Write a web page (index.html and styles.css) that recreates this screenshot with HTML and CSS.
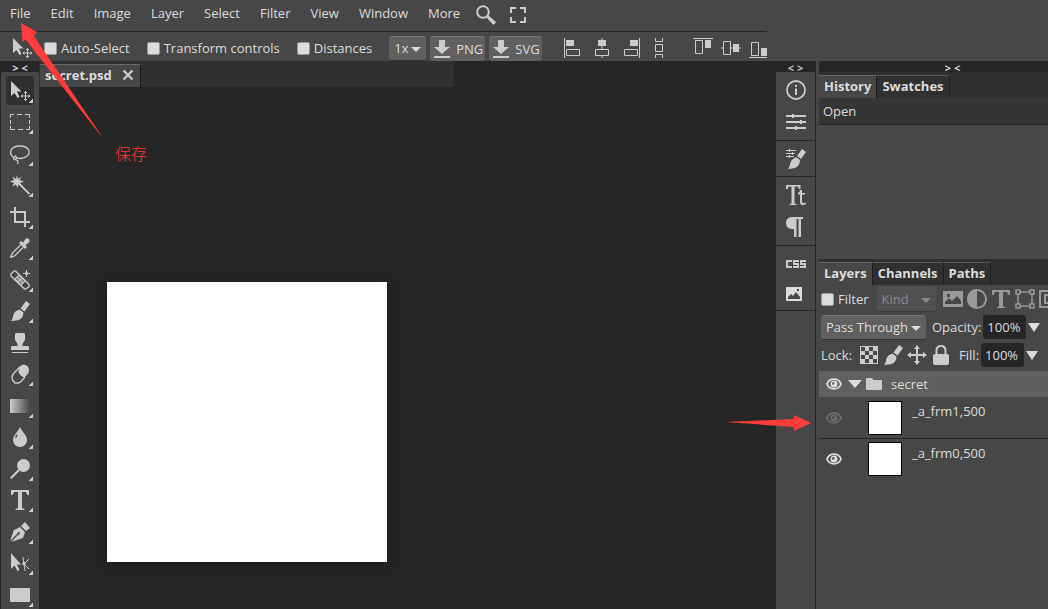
FILE: index.html
```html
<!DOCTYPE html>
<html lang="en">
<head>
<meta charset="utf-8">
<title>secret.psd</title>
<link rel="stylesheet" href="styles.css">
</head>
<body>
<svg class="defs" aria-hidden="true">
  <defs>
    <symbol id="move-tool" viewBox="0 0 20 20"><path d="M1 0V15L4.500 12L7.500 17L9.500 16L7 10.500H11.500Z"/><path d="M15.500 10.500V19.500M11 15H20M14 12L15.500 10.500L17 12M14 18L15.500 19.500L17 18M12.500 13.500L11 15L12.500 16.500M18.500 13.500L20 15L18.500 16.500" fill="none" stroke="currentColor"/></symbol>
    <symbol id="brush" viewBox="0 0 20 20"><path d="M16 0L20 3L14.500 10.500L10.500 7.500Z"/><path d="M9.500 8.500L13.500 11.500C13.500 16 11 19 6 19.500L1 20C4 17 2 13 6 10Z"/></symbol>
    <symbol id="eye" viewBox="0 0 16 12"><path d="M1 6C3.500 -.5 12.500 -.5 15 6C12.500 12.500 3.500 12.500 1 6Z" fill="none" stroke="currentColor" stroke-width="1.800"/><path fill-rule="evenodd" d="M8 2.500A3.500 3.500 0 1 1 8 9.500A3.500 3.500 0 1 1 8 2.500ZM7.500 4A1.500 1.500 0 1 0 7.500 7V5.500H9Q8.800 4 7.500 4Z"/></symbol>
    <symbol id="down" viewBox="0 0 20 20"><path d="M7 1H13V8H18L10 15L2 8H7ZM2 17H18V19H2Z"/></symbol>
    <linearGradient id="fade"><stop stop-color="#ccc"/><stop offset="1" stop-color="#474747"/></linearGradient>
  </defs>
</svg>

<div class="app">
  <header class="top">
    <nav class="menu">
      <button>File</button><button>Edit</button><button>Image</button><button>Layer</button><button>Select</button><button>Filter</button><button>View</button><button>Window</button><button>More</button>
      <button class="glyph" aria-label="Search"><svg width="20" height="20" viewBox="0 0 20 20"><circle cx="7" cy="7" r="5.800" fill="none" stroke="currentColor" stroke-width="2"/><path d="M11 12.500L12.500 11L19.500 17L17.500 19.500Z" stroke="currentColor"/></svg></button>
      <button class="glyph" aria-label="Full screen"><svg width="16" height="16" viewBox="0 0 16 16"><path d="M1 6V1H6M10 1H15V6M15 10V15H10M6 15H1V10" fill="none" stroke="currentColor" stroke-width="2"/></svg></button>
    </nav>
    <div class="options">
      <svg class="current" width="20" height="20"><use href="#move-tool"/></svg>
      <label class="check"><input type="checkbox">Auto-Select</label>
      <label class="check"><input type="checkbox">Transform controls</label>
      <label class="check"><input type="checkbox">Distances</label>
      <div class="exports">
        <span class="drop drop-scale"><select aria-label="Export scale"><option>1x</option></select></span>
        <button class="export"><svg width="20" height="20"><use href="#down"/></svg>PNG</button>
        <button class="export"><svg width="20" height="20"><use href="#down"/></svg>SVG</button>
      </div>
      <div class="align">
        <button aria-label="Align left"><svg width="16" height="20" viewBox="0 0 16 20"><path d="M0 0H1V20H0ZM2 2H10V8H2Z"/><path d="M2.500 11.500H15.500V17.500H2.500Z" class="line"/></svg></button>
        <button aria-label="Align centre"><svg width="14" height="20" viewBox="0 0 14 20"><path d="M6 0H8V2H6ZM6 8H8V11H6ZM6 18H8V20H6Z" opacity=".5"/><path d="M3 2H11V8H3Z"/><path d="M.5 11.500H13.500V17.500H.5Z" class="line"/></svg></button>
        <button aria-label="Align right"><svg width="16" height="20" viewBox="0 0 16 20"><path d="M15 0H16V20H15ZM6 2H14V8H6Z"/><path d="M.5 11.500H13.500V17.500H.5Z" class="line"/></svg></button>
        <button aria-label="Distribute"><svg width="8" height="20" viewBox="0 0 8 20"><path d="M.5 0V3.500H7.500V0M.5 6.500H7.500V13.500H.5ZM.5 20V16.500H7.500V20" class="line"/></svg></button>
      </div>
      <div class="align align-vertical">
        <button aria-label="Align top"><svg width="20" height="20" viewBox="0 0 20 20"><path d="M0 0H20V1H0ZM12 2H18V10H12Z"/><path d="M2.500 2.500H9.500V15.500H2.500Z" class="line"/></svg></button>
        <button aria-label="Align middle"><svg width="20" height="20" viewBox="0 0 20 20"><path d="M0 9H2V11H0ZM10 9H12V11H10ZM18 9H20V11H18Z" opacity=".5"/><path d="M12 6H18V14H12Z"/><path d="M2.500 3.500H9.500V16.500H2.500Z" class="line"/></svg></button>
        <button aria-label="Align bottom"><svg width="20" height="20" viewBox="0 0 20 20"><path d="M0 19H20V20H0ZM12 10H18V18H12Z"/><path d="M2.500 4.500H9.500V17.500H2.500Z" class="line"/></svg></button>
      </div>
    </div>
  </header>

  <main class="body">
    <aside class="tools">
      <div class="grip">&gt;&nbsp;&lt;</div>
      <div class="tool-list">
        <button class="tool active" aria-label="Move"><svg viewBox="0 0 20 20"><use href="#move-tool"/></svg></button>
        <button class="tool" aria-label="Marquee"><svg viewBox="0 0 20 20"><path d="M.5 6V2.500H4M7 2.500H12M15 2.500H19.500V6M19.500 8V12M19.500 14V17.500H16M13 17.500H8M5 17.500H.5V14M.5 12V8" class="line"/></svg></button>
        <button class="tool" aria-label="Lasso"><svg viewBox="0 0 20 20"><path d="M4 13.500C-2 10 0 2 10 2C22.500 2 22 14 10 14.500C8 14.500 6.500 14 5.500 12.500C3.500 12.500 2.500 14.500 4.500 15.500C7.500 15.500 6.500 12.500 5 11.500M5 15.500L8 17L7.500 20" class="line" stroke-width="1.300"/></svg></button>
        <button class="tool" aria-label="Magic wand"><svg viewBox="0 0 20 20"><path d="M7 0L8 4L11.500 1.500L9.500 5L14 6.500L10 8L12 11L8.500 9.500L7.500 13L6 9.500L2.500 11.500L4 8L0 6.500L4 5L2.500 1.500L6 4Z"/><path d="M9 8.500L19.500 19" class="line" stroke-width="1.800"/></svg></button>
        <button class="tool" aria-label="Crop"><svg viewBox="0 0 20 20"><path d="M5 0V15H20M0 5H15V20" class="line" stroke-width="2"/></svg></button>
        <button class="tool" aria-label="Eyedropper"><svg viewBox="0 0 20 20"><path d="M11 3L13 4.500L15.500 1C17.500-1 21 2 19 4.500L15.500 7L17 9L15 11L9 5Z"/><path d="M10.500 7L2 15.500L.8 19.200L4.500 18L13 9.500" class="line" stroke-width="1.300"/></svg></button>
        <button class="tool" aria-label="Healing"><svg viewBox="0 0 20 20"><path d="M1 4L4 1Q5 .5 6 1.500L19 14.500Q19.500 15.500 19 16.500L16 19Q15 19.500 14 18.500L1 6Q.5 5 1 4Z" class="line" stroke-width="1.300"/><path d="M4 9L9 4L16 11L11 16Z" opacity=".45"/><path d="M5 9L11 15M7 7L13 13M9 5L15 11M5 9L9 5M8 12L12 8M11 15L15 11M16.500 0V7M13 3.500H20" class="line"/><path d="M16.500 1L17.500 2.500L19 3.500L17.500 4.500L16.500 6L15.500 4.500L14 3.500L15.500 2.500Z"/></svg></button>
        <button class="tool" aria-label="Brush"><svg viewBox="0 0 20 20"><use href="#brush"/></svg></button>
        <button class="tool plain" aria-label="Clone stamp"><svg viewBox="0 0 20 20"><path d="M6 0H14L15 1V7L12.500 11V13H18L19 14V17H1V14L2 13H7.500V11L5 7V1ZM2 19H18V20H2Z"/></svg></button>
        <button class="tool" aria-label="Eraser"><svg viewBox="0 0 20 20"><path d="M11 1.500L14 .5L17.500 2L19 5L18.500 9L14.500 13.500L11 12L8.500 8.500L9 4Z"/><path d="M10.500 2.500L4 9L2 12.500L2.500 16L5 19L8.500 19L11 17.500L15 13" class="line" stroke-width="1.400"/></svg></button>
        <button class="tool" aria-label="Gradient"><svg viewBox="0 0 20 20"><path d="M0 3H20V17H0Z" fill="url(#fade)"/></svg></button>
        <button class="tool" aria-label="Blur"><svg viewBox="0 0 20 20"><path d="M10 0C12 5 17 8 17 13A7 7 0 0 1 3 13C3 8 8 5 10 0Z"/><path d="M7.500 8Q5.500 9 6 11" fill="none" stroke="#474747" stroke-width="1.300"/></svg></button>
        <button class="tool" aria-label="Dodge"><svg viewBox="0 0 20 20"><circle cx="13.500" cy="6.500" r="6.500"/><path d="M9 11L.8 19.200" class="line" stroke-width="2"/></svg></button>
        <button class="tool" aria-label="Type"><svg viewBox="0 0 20 20"><path d="M1 0H19V5H17.500L16 2H12V18L14.500 19V20H5.500V19L8 18V2H4L2.500 5H1Z"/></svg></button>
        <button class="tool" aria-label="Pen"><svg viewBox="0 0 20 20"><path d="M15 0L20 6L16 9L11 4ZM10 5L15 10L13 16L1 20L8.500 12.500A1.200 1.200 0 1 0 7.500 11.500L0 19L4 8Z"/></svg></button>
        <button class="tool" aria-label="Path select"><svg viewBox="0 0 20 20"><path d="M1 0V16L4.500 12.500L7.500 18L9.500 17L7 11.500H11Z"/><path d="M13 4L15 18M19 6L14 11L19 16" class="line"/><path d="M12.500 9H15.500V12H12.500Z"/></svg></button>
        <button class="tool" aria-label="Rectangle"><svg viewBox="0 0 20 20"><rect y="3" width="20" height="14" rx="1"/></svg></button>
      </div>
    </aside>

    <section class="workspace">
      <div class="file-tabs"><div class="file-tab">secret.psd <button aria-label="Close"><svg width="12" height="12" viewBox="0 0 12 12"><path d="M1.500 1.500L10.500 10.500M10.500 1.500L1.500 10.500" stroke="currentColor" stroke-width="2.300"/></svg></button></div></div>
      <div class="artboard"></div>
    </section>

    <aside class="dock">
      <div class="grip">&lt;&nbsp;&gt;</div>
      <div class="dock-group">
        <button aria-label="Info"><svg viewBox="0 0 20 20"><circle cx="10" cy="10" r="9" class="line" stroke-width="1.800"/><path d="M9 5H11V7H9ZM9 8.500H11V15H9Z"/></svg></button>
        <button aria-label="Adjustments"><svg viewBox="0 0 20 20"><path d="M0 3H20V5H0ZM0 9H20V11H0ZM0 15H20V17H0ZM6 2H8V6H6ZM14 8H16V12H14ZM9 14H11V18H9Z"/></svg></button>
      </div>
      <div class="dock-group dock-single">
        <button aria-label="Brush settings"><svg viewBox="0 0 20 20"><path d="M0 1H10V2H0ZM0 4H9V5H0ZM0 7H8V8H0ZM3 0H4V3H3ZM6 3H7V6H6ZM3 6H4V9H3ZM16 0L20 3L15 10L11 7ZM10 8L14 11C14 16 11 20 2 20C5 17 3 13 7 10Z"/></svg></button>
      </div>
      <div class="dock-group">
        <button aria-label="Character"><svg viewBox="0 0 20 20"><path d="M0 0H14.500V4H13L12 1.500H8.500V18.500L10.500 19V20H3.500V19L5.500 18.500V1.500H2.500L1.500 4H0ZM14 5H16V8H19V9.500H16V17Q17 19 20 17.500V19Q14 22 14 17V9.500H12V8Q14 7.500 14 5Z"/></svg></button>
        <button aria-label="Paragraph"><svg viewBox="0 0 20 20"><path d="M6 0H17V2H15V20H12.500V2H10.500V20H8V12H6C-2 12-2 0 6 0Z"/></svg></button>
      </div>
      <div class="dock-group dock-last">
        <button aria-label="CSS"><svg viewBox="0 0 20 20"><path d="M6 7H1V13H6M13 7H8V10H12V13H7M20 7H15V10H19V13H14" class="line" stroke-width="2"/></svg></button>
        <button class="bright" aria-label="Image"><svg viewBox="0 0 20 20"><path fill-rule="evenodd" d="M0 3H16V17H0ZM2 15H14V13L10 8L7 12L5 10L2 13ZM11 5V7H13V5Z"/></svg></button>
      </div>
    </aside>

    <aside class="panels">
      <div class="grip">&gt;&nbsp;&lt;</div>
      <section class="history">
        <div class="tabs"><button class="tab active">History</button><button class="tab">Swatches</button></div>
        <div class="step">Open</div>
      </section>
      <section class="layers">
        <div class="tabs"><button class="tab active">Layers</button><button class="tab">Channels</button><button class="tab">Paths</button></div>
        <div class="row">
          <label class="check"><input type="checkbox">Filter</label>
          <span class="drop drop-kind"><select aria-label="Filter kind" disabled><option>Kind</option></select></span>
          <div class="kinds">
            <svg viewBox="0 0 20 20"><path fill-rule="evenodd" d="M0 2H20V18H0ZM2 15H18V12L14 7L9 12L6 9L2 13ZM4 5V8H7V5Z"/></svg>
            <svg viewBox="0 0 20 20"><circle cx="10" cy="10" r="9" class="line" stroke-width="2"/><path d="M10 0A10 10 0 0 0 10 20Z"/></svg>
            <svg viewBox="0 0 20 20"><path d="M1 1H19V6H17.500L16 3H12V17.500L14 18V19H6V18L8 17.500V3H4L2.500 6H1Z"/></svg>
            <svg viewBox="0 0 20 20"><path d="M1 1H5V5H1ZM15 1H19V5H15ZM1 15H5V19H1ZM15 15H19V19H15ZM5 3H15M5 17H15M3 5V15M17 5V15" class="line" stroke-width="1.500"/></svg>
            <svg viewBox="0 0 20 20"><path d="M1 2H19V18H1ZM6 6H14V14H6Z" class="line" stroke-width="2"/></svg>
          </div>
        </div>
        <div class="row">
          <span class="drop drop-blend"><select aria-label="Blend mode"><option>Pass Through</option></select></span>
          <label class="amount amount-opacity">Opacity:<input type="text" value="100%"></label><button class="more" aria-label="Opacity slider"></button>
        </div>
        <div class="row">
          <span>Lock:</span>
          <div class="locks">
            <button aria-label="Lock transparency"><svg viewBox="0 0 20 20"><path fill-rule="evenodd" d="M1 1H19V19H1ZM2 2V6H6V2ZM10 2V6H14V2ZM6 6V10H10V6ZM14 6V10H18V6ZM2 10V14H6V10ZM10 10V14H14V10ZM6 14V18H10V14ZM14 14V18H18V14Z"/></svg></button>
            <button aria-label="Lock pixels"><svg viewBox="0 0 20 20"><use href="#brush"/></svg></button>
            <button aria-label="Lock position"><svg viewBox="0 0 20 20"><path d="M10 0L13 4H11V9H16V7L20 10L16 13V11H11V16H13L10 20L7 16H9V11H4V13L0 10L4 7V9H9V4H7Z"/></svg></button>
            <button aria-label="Lock all"><svg viewBox="0 0 20 20"><path d="M5.500 10V5.500Q5.500 1 10 1T14.500 5.500V10" class="line" stroke-width="2"/><rect x="2" y="9" width="16" height="11" rx="2"/></svg></button>
          </div>
          <label class="amount">Fill:<input type="text" value="100%"></label><button class="more" aria-label="Fill slider"></button>
        </div>
        <div class="folder">
          <svg class="eye" viewBox="0 0 16 12"><use href="#eye"/></svg>
          <svg class="caret" viewBox="0 0 14 8"><path d="M0 0H14L7 8Z"/></svg>
          <svg class="folder-icon" viewBox="0 0 16 12"><path d="M0 1Q0 0 1 0H6L7.500 2H15Q16 2 16 3V11Q16 12 15 12H1Q0 12 0 11Z"/></svg>
          <span>secret</span>
        </div>
        <div class="layer"><svg class="eye hidden-layer" viewBox="0 0 16 12"><use href="#eye"/></svg><div class="thumb"></div><span>_a_frm1,500</span></div>
        <div class="layer"><svg class="eye" viewBox="0 0 16 12"><use href="#eye"/></svg><div class="thumb"></div><span>_a_frm0,500</span></div>
      </section>
    </aside>
  </main>

  <svg class="pointer pointer-file" width="110" height="140" viewBox="0 0 110 140"><path d="M21 23L37 32L33.500 35.500L101 135L99.500 134L25.500 39.500L22.500 42Z"/></svg>
  <span class="note" lang="zh">保存</span>
  <svg class="pointer pointer-layer" width="86" height="18" viewBox="0 0 86 18"><path d="M0 7L69 4V0L86 8L69 16V12Z"/></svg>
</div>
</body>
</html>
```

FILE: styles.css
```css
* { box-sizing: border-box; }

body {
  margin: 0;
  background: #262626;
  color: #dcdcdc;
  font: 13px/18px "Open Sans", "Noto Sans CJK SC", sans-serif;
}

button, select, input { font: inherit; color: inherit; }

button {
  display: flex;
  align-items: center;
  justify-content: center;
  margin: 0;
  padding: 0;
  border: 0;
  background: none;
}

svg { display: block; flex: none; fill: currentColor; }
.line { fill: none; stroke: currentColor; }
.defs { position: absolute; width: 0; height: 0; }

.app {
  position: relative;
  display: flex;
  flex-direction: column;
  height: 100vh;
  overflow: hidden;
}

/* Menu and tool options */
.top {
  flex: none;
  padding-right: 281px;
  background: #474747;
}

.menu {
  display: flex;
  align-items: center;
  height: 32px;
  padding-bottom: 6px;
  border-bottom: 1px solid #262626;
}
.menu button { padding: 0 10px; }
.menu .glyph { padding: 4px 0 0 6px; color: #ccc; }
.menu .glyph + .glyph { padding-left: 14px; }

.options {
  display: flex;
  align-items: center;
  height: 29px;
  padding: 3px 0 0 12px;
  overflow: hidden;
  white-space: nowrap;
}
.current { color: #ccc; }

.check { display: flex; align-items: center; gap: 4px; }
.check input {
  appearance: none;
  width: 13px;
  height: 13px;
  margin: 1px 0 0;
  border: 1px solid #999;
  border-radius: 2px;
  background: #dcdcdc;
}
.options .check { margin-right: 17px; }
.options .current + .check { margin-left: 12px; }

.exports { display: flex; flex: none; gap: 4px; }

.drop { position: relative; display: block; flex: none; }
.drop select {
  appearance: none;
  display: block;
  width: 100%;
  height: 25px;
  margin: 0;
  padding: 0 0 0 5px;
  border: 0;
  border-top: 1px solid #737373;
  border-bottom: 1px solid #303030;
  border-radius: 3px;
  background: #606060;
}
.drop::after {
  content: "";
  position: absolute;
  right: 5px;
  top: 11px;
  border: 5px solid transparent;
  border-top-color: #dcdcdc;
  border-bottom: 0;
}
.drop-scale { width: 37px; }
.drop-kind { width: 59px; }
.drop-kind select {
  border-top-color: #555;
  border-bottom-color: #3c3c3c;
  background: #505050;
  color: #888;
  opacity: 1;
}
.drop-kind::after { border-top-color: #888; }
.drop-blend { width: 105px; }

.export {
  gap: 4px;
  height: 25px;
  padding: 0 2px;
  border-top: 1px solid #737373;
  border-radius: 3px;
  background: #606060;
}
.export svg { color: #ccc; }

.align { display: flex; flex: none; gap: 15px; margin-left: 22px; color: #ccc; }
.align-vertical { gap: 8px; margin-left: 30px; }

/* Main area */
.body { display: flex; flex: 1; min-height: 0; }

.grip {
  flex: none;
  height: 11px;
  background: #262626;
  font-size: 11px;
  font-weight: 700;
  line-height: 13px;
  text-align: center;
}

.tools { display: flex; flex-direction: column; flex: none; width: 39px; padding-left: 1px; }
.tool-list { flex: 1; min-height: 0; padding: 4px 5px 0; background: #474747; }
.tool {
  position: relative;
  width: 28px;
  height: 29px;
  margin-bottom: 2px;
  border-radius: 3px;
  color: #ccc;
}
.tool:nth-child(even) { margin-bottom: 3px; }
.tool.active { background: #303030; }
.tool svg { width: 20px; height: 20px; }
.tool::after {
  content: "";
  position: absolute;
  right: 1px;
  bottom: 2px;
  width: 5px;
  height: 5px;
  background: linear-gradient(135deg, transparent 50%, #ccc 60%);
}
.tool.plain::after { display: none; }

.workspace { flex: 1; min-width: 0; }
.file-tabs {
  width: 415px;
  height: 26px;
  padding: 3px 0 0 1px;
  background: #303030;
}
.file-tab {
  display: flex;
  align-items: center;
  gap: 10px;
  width: 101px;
  height: 23px;
  padding: 0 0 2px 5px;
  border-top: 1px solid #666;
  border-right: 1px solid #1c1c1c;
  background: #474747;
  font-weight: 700;
}
.file-tab button { color: #ccc; }
.artboard {
  width: 280px;
  height: 280px;
  margin: 195px 0 0 68px;
  background: #fff;
  box-shadow: 0 2px 12px #1c1c1c;
}

/* Collapsed panels */
.dock {
  display: flex;
  flex-direction: column;
  flex: none;
  width: 40px;
  border-right: 1px solid #262626;
  background: #474747;
  color: #ccc;
}
.dock-group { padding: 2px 0; border-bottom: 1px solid #262626; }
.dock-single { padding-bottom: 1px; }
.dock-group button { width: 39px; height: 32px; }
.dock-group svg { width: 20px; height: 20px; }
.dock-last { padding: 3px 0 1px; }
.dock-last button { height: 30px; }
.dock .bright { color: #dcdcdc; }

/* Panels */
.panels {
  display: flex;
  flex-direction: column;
  flex: none;
  width: 232px;
  padding-left: 3px;
  overflow: hidden;
  background: #474747;
}
.panels .grip { padding-left: 38px; }
.tabs { display: flex; padding-top: 3px; background: #303030; }
.tab {
  height: 23px;
  padding: 0 5px 2px;
  border-top: 1px solid #555;
  border-right: 1px solid #1c1c1c;
  font-weight: 700;
}
.tab.active { border-top-color: #666; background: #474747; }

.history { flex: none; height: 187px; }
.step {
  height: 27px;
  padding: 4px;
  border-bottom: 1px solid #262626;
  background: #353535;
}

.layers { flex: 1; min-height: 0; white-space: nowrap; }
.row { display: flex; align-items: center; height: 28px; padding-left: 2px; }
.row .drop-kind { margin-left: 8px; }
.kinds { display: flex; gap: 4px; margin-left: 7px; color: #999; }
.kinds svg, .locks svg { width: 20px; height: 20px; }
.locks { display: flex; gap: 4px; margin: 0 8px 0 7px; color: #ccc; }

.amount { display: flex; align-items: center; gap: 2px; }
.amount-opacity { margin-left: 6px; }
.amount input {
  width: 43px;
  height: 24px;
  padding: 0 4px;
  border: 0;
  border-radius: 3px;
  background: #262626;
}
.more {
  margin-left: 2px;
  border: 6px solid transparent;
  border-top: 9px solid #dcdcdc;
  border-bottom: 0;
}

.folder {
  display: flex;
  align-items: center;
  height: 26px;
  margin-top: 2px;
  padding-left: 7px;
  background: #606060;
}
.eye { width: 16px; height: 12px; color: #dcdcdc; }
.hidden-layer { opacity: 0.25; }
.caret { width: 14px; height: 8px; margin-left: 6px; }
.folder-icon { width: 16px; height: 12px; margin: 0 9px 0 4px; color: #ccc; }

.layer {
  display: flex;
  align-items: center;
  height: 41px;
  padding-left: 7px;
}
.layer + .layer { border-top: 1px solid #262626; }
.thumb {
  width: 34px;
  height: 34px;
  margin: 0 10px 0 26px;
  border: 1px solid #000;
  background: #fff;
}
.layer span { align-self: flex-start; padding-top: 5px; }

/* Annotations over the editor */
.pointer { position: absolute; color: #ff3b3b; pointer-events: none; }
.pointer-file { left: 0; top: 0; }
.pointer-layer { left: 725px; top: 415px; }
.note {
  position: absolute;
  left: 115px;
  top: 142px;
  color: #ff3333;
  font-size: 16px;
  font-weight: 300;
  line-height: 24px;
}
```
